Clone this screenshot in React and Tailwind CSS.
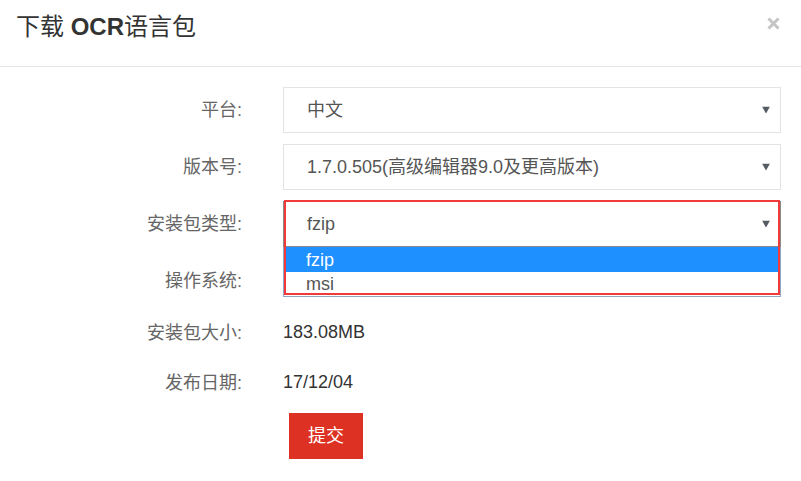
import React from 'react'

const font = { fontFamily: '"Liberation Sans", "Noto Sans CJK SC", sans-serif' }

function Arrow() {
	return (
		<svg width="8" height="7" viewBox="0 0 8 7" className="absolute right-[10px] top-1/2 -translate-y-1/2">
			<path d="M0 0 H8 L4 7 Z" fill="#555b63" />
		</svg>
	)
}

function SelectBox({value, dark}) {
	return (
		<div className={"relative h-[46px] w-[498px] bg-white flex items-center pl-[23px] text-[18px] text-[#555] " + (dark ? "border border-[#8a8a8a]" : "border border-[#e3e3e3]")}>
			<span className="leading-none">{value}</span>
			<Arrow />
		</div>
	)
}

function Row({label, children, className}) {
	return (
		<div className={"flex items-center " + (className || "")}>
			<div className="w-[242px] text-right text-[18px] text-[#666] leading-none">{label}</div>
			<div className="ml-[41px]">{children}</div>
		</div>
	)
}

export default function App() {
	return (
		<div className="w-[801px] h-[481px] bg-white overflow-hidden" style={font}>
			<div className="relative h-[67px] border-b border-[#e5e5e5]">
				<h4 className="absolute left-[16px] top-[14px] text-[24px] leading-[26px] text-[#333]">
					下载 <span className="font-bold">OCR</span>语言包
				</h4>
				<svg width="13" height="13" viewBox="0 0 13 13" className="absolute left-[767px] top-[17px]">
					<path d="M1.5 1.5 L11.5 11.5 M11.5 1.5 L1.5 11.5" stroke="#c4c4c4" strokeWidth="3" />
				</svg>
			</div>

			<div className="relative pt-[20px]">
				<Row label="平台:" className="mb-[11px]"><SelectBox value="中文" /></Row>
				<Row label="版本号:" className="mb-[11px]"><SelectBox value="1.7.0.505(高级编辑器9.0及更高版本)" /></Row>
				<Row label="安装包类型:" className="mb-[11px]">
					<div className="relative">
						<SelectBox value="fzip" dark />
						<div className="absolute left-0 top-[46px] w-[498px] bg-white border border-[#8fa6c4] border-t-0 text-[18px] z-10">
							<div className="h-[25px] bg-[#1e90ff] text-white flex items-center pl-[22px] leading-none">fzip</div>
							<div className="h-[24px] text-[#555] flex items-center pl-[22px] leading-none">msi</div>
						</div>
						<div className="absolute left-[1px] top-[-1px] w-[496px] h-[95px] border-2 border-[#f23a3a] z-20 pointer-events-none"></div>
					</div>
				</Row>
				<Row label="操作系统:"><div className="h-[46px] w-[498px]"></div></Row>
				<Row label="安装包大小:" className="mt-[9px] h-[40px]">
					<span className="text-[18px] text-[#333] leading-none">183.08MB</span>
				</Row>
				<Row label="发布日期:" className="mt-[10px] h-[40px]">
					<span className="text-[18px] text-[#333] leading-none">17/12/04</span>
				</Row>
				<div className="mt-[10px] ml-[289px]">
					<button className="w-[74px] h-[46px] bg-[#dd3223] text-white text-[18px] leading-none">提交</button>
				</div>
			</div>
		</div>
	)
}
